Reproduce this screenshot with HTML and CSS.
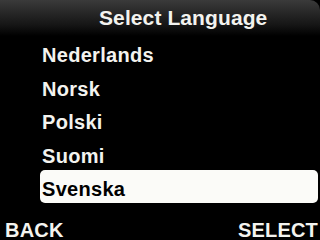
FILE: index.html
```html
<!DOCTYPE html>
<html>
<head>
<meta charset="utf-8">
<link rel="stylesheet" href="styles.css">
</head>
<body>
<div class="screen">
  <div class="header">Select Language</div>
  <ul class="list">
    <li class="item">Nederlands</li>
    <li class="item">Norsk</li>
    <li class="item">Polski</li>
    <li class="item">Suomi</li>
    <li class="item selected">Svenska</li>
  </ul>
  <div class="footer">
    <span class="softkey">BACK</span>
    <span class="softkey">SELECT</span>
  </div>
</div>
</body>
</html>
```
FILE: styles.css
```css
html, body {
  margin: 0;
  padding: 0;
  background: #000;
}
.screen {
  width: 320px;
  height: 240px;
  overflow: hidden;
  display: flex;
  flex-direction: column;
  background: #000;
  color: #f3f3ef;
  font-family: "Liberation Sans", Arial, sans-serif;
  font-weight: bold;
}
.header {
  height: 36px;
  box-sizing: border-box;
  padding-top: 7px;
  padding-left: 99px;
  font-size: 21px;
  line-height: 21px;
  letter-spacing: 0.1px;
  background: linear-gradient(to bottom, #3a3a3a 0%, #151515 70%, #000 100%);
  border-top-right-radius: 10px;
}
.list {
  list-style: none;
  margin: 0 2px 0 40px;
  padding: 0;
  display: flex;
  flex-direction: column;
  gap: 0.5px;
}
.item {
  height: 33px;
  box-sizing: border-box;
  padding: 5px 0 0 2px;
  font-size: 20px;
  line-height: 28px;
  letter-spacing: 0.3px;
}
.selected {
  background: #fbfbf8;
  color: #000;
  border-radius: 5px;
}
.footer {
  margin-top: auto;
  height: 19px;
  display: flex;
  justify-content: space-between;
  padding: 0 2px 0 5px;
  font-size: 20px;
  line-height: 19px;
  letter-spacing: 0.2px;
}
```
